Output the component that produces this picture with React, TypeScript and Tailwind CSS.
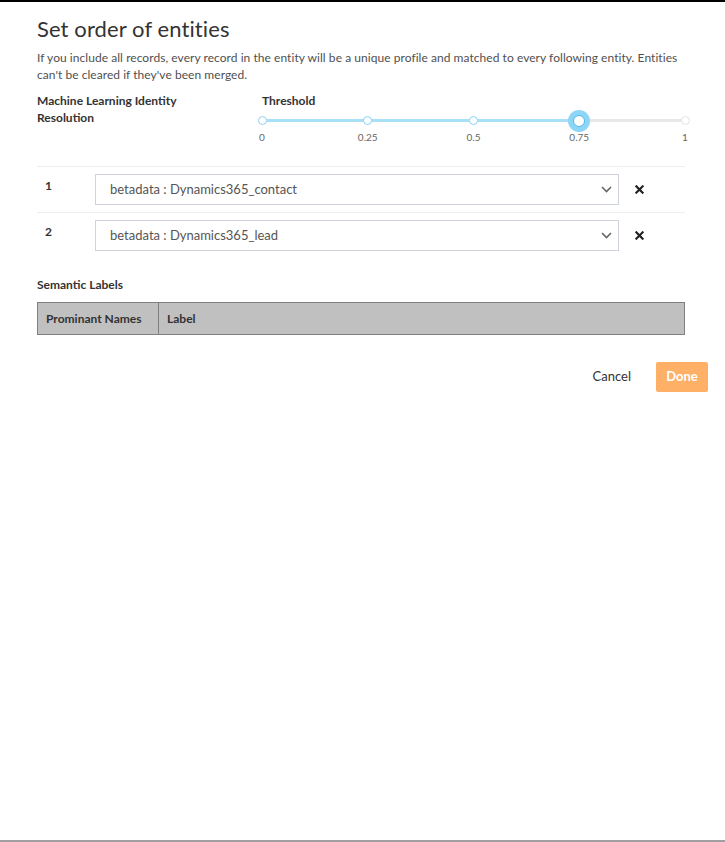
import React from "react";

const ticks = [
  { v: "0", p: 0 },
  { v: "0.25", p: 25 },
  { v: "0.5", p: 50 },
  { v: "0.75", p: 75 },
  { v: "1", p: 100 },
];

const rows = [
  { n: "1", value: "betadata : Dynamics365_contact" },
  { n: "2", value: "betadata : Dynamics365_lead" },
];

function Chevron() {
  return (
    <svg width="11" height="7" viewBox="0 0 11 7" className="shrink-0">
      <path d="M1 1l4.5 4.5L10 1" fill="none" stroke="#666" strokeWidth="1.6" />
    </svg>
  );
}

function Cross() {
  return (
    <svg width="9" height="9" viewBox="0 0 10 10">
      <path d="M1.5 1.5l7 7M8.5 1.5l-7 7" stroke="#222" strokeWidth="2.4" strokeLinecap="square" />
    </svg>
  );
}

function Slider() {
  return (
    <div className="relative h-[24px] w-[423px]">
      <div className="absolute left-0 right-0 top-[10px] h-[3px] bg-[#e8e8e8] rounded" />
      <div className="absolute left-0 top-[10px] h-[3px] w-[75%] bg-[#a8e0f7] rounded" />
      {ticks.map((t) =>
        t.p === 75 ? null : (
          <div
            key={t.v}
            className={
              t.p < 75
                ? "absolute top-[7px] w-[9px] h-[9px] -ml-[4.5px] rounded-full bg-white border border-[#8fd3f4]"
                : "absolute top-[7px] w-[9px] h-[9px] -ml-[4.5px] rounded-full bg-white border border-[#e3e3e3]"
            }
            style={{ left: `${t.p}%` }}
          />
        )
      )}
      <div className="absolute left-[75%] top-[1px] -ml-[11px] w-[22px] h-[22px] rounded-full bg-[#8ed6f7] flex items-center justify-center">
        <div className="w-[12px] h-[12px] rounded-full bg-white border border-[#4fb8ea]" />
      </div>
      {ticks.map((t) => (
        <span
          key={"l" + t.v}
          className="absolute top-[22px] -translate-x-1/2 text-[10px] leading-[12px] text-[#666]"
          style={{ left: `${t.p}%` }}
        >
          {t.v}
        </span>
      ))}
    </div>
  );
}

export default function App() {
  return (
    <div
      className="w-[725px] h-[842px] flex overflow-hidden bg-white"
      style={{ fontFamily: "Lato, 'Noto Sans', sans-serif" }}
    >
      {/* left backdrop edge */}
      <div className="w-px flex flex-col bg-[#9a9a9a]">
        <div className="h-[73px]" />
        <div className="h-[45px] bg-[#0a8fa8]" />
      </div>

      {/* modal column */}
      <div className="flex-1 flex flex-col">
        <div className="h-[2px] bg-black shrink-0" />
        <div className="flex-1 bg-white pl-[37px] pr-[33px] pt-[12px] text-[#333]">
          <h1 className="text-[22px] leading-[30px] text-[#333] tracking-[0.1px]">Set order of entities</h1>
          <p className="mt-[5px] text-[12px] leading-[17px] text-[#505050] w-[660px] tracking-[0.05px]">
            If you include all records, every record in the entity will be a unique profile and matched to every following entity. Entities can't be cleared if they've been merged.
          </p>

          <div className="flex mt-[9px]">
            <div className="w-[225px] text-[12px] leading-[17px] font-bold text-[#333]">
              Machine Learning Identity
              <br />
              Resolution
            </div>
            <div className="flex flex-col">
              <div className="text-[12px] leading-[17px] font-bold text-[#333]">Threshold</div>
              <Slider />
            </div>
          </div>

          <div className="mt-[33px] w-[648px] border-t border-[#eeeeee]">
            {rows.map((r) => (
              <div key={r.n} className="flex items-start py-[7px] border-b border-[#eeeeee] last:border-b-0">
                <div className="w-[58px] pl-[8px] pt-[3px] text-[12px] leading-[17px] font-bold text-[#333]">{r.n}</div>
                <div className="w-[524px] h-[31px] border border-[#cfd3dc] flex items-center justify-between pl-[14px] pr-[6px]">
                  <span className="text-[13px] text-[#555]">{r.value}</span>
                  <Chevron />
                </div>
                <div className="ml-[16px] h-[31px] flex items-center">
                  <Cross />
                </div>
              </div>
            ))}
          </div>

          <div className="mt-[18px] text-[12px] leading-[17px] font-bold text-[#333]">Semantic Labels</div>
          <div className="mt-[9px] w-[648px] h-[33px] bg-[#c0c0c0] border border-[#808080] flex text-[12px] font-bold text-[#333]">
            <div className="w-[121px] border-r border-[#808080] flex items-center pl-[8px]">Prominant Names</div>
            <div className="flex items-center pl-[8px]">Label</div>
          </div>

          <div className="mt-[27px] w-[671px] flex justify-end items-center">
            <button className="text-[13px] text-[#333] mr-[25px]">Cancel</button>
            <button className="w-[52px] h-[30px] rounded-[2px] bg-[#ffb067] text-white text-[13px] font-bold">Done</button>
          </div>
        </div>
        <div className="h-[2px] bg-[#a0a0a0] shrink-0" />
      </div>

      {/* scrollbar */}
      <div className="w-[5px] bg-[#efefef] flex">
        <div className="w-[1px] bg-[#dedede]" />
        <div className="w-[3px] h-[645px] bg-[#bdbdbd]" />
      </div>
    </div>
  );
}
